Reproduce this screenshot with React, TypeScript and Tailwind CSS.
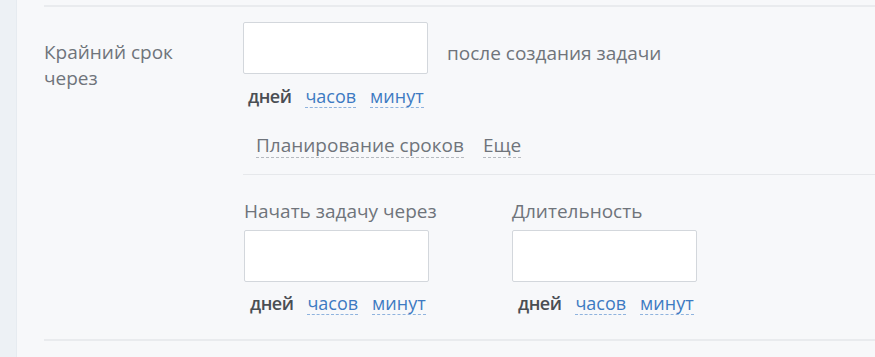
import React from "react"

function Units() {
  return (
    <div className="flex items-start gap-[14px] text-[18px] leading-[22px]">
      <span className="font-semibold tracking-[-0.5px] text-[#4a4e54]">дней</span>
      <span className="text-[#3d7ac2] border-b border-dashed border-[#8fb3de]">часов</span>
      <span className="text-[#3d7ac2] border-b border-dashed border-[#8fb3de]">минут</span>
    </div>
  )
}

function Field({ label }: { label: string }) {
  return (
    <div className="w-[268px] flex flex-col">
      <div className="text-[19px] leading-[22px] text-[#6f747b]">{label}</div>
      <div className="mt-[8px] w-[185px] h-[52px] bg-white border border-[#d3d7dc] rounded-[2px]" />
      <div className="mt-[10px] pl-[6px]">
        <Units />
      </div>
    </div>
  )
}

export default function App() {
  return (
    <div
      className="flex w-[875px] h-[357px] bg-[#f7f8fa] overflow-hidden"
      style={{ fontFamily: '"Open Sans", "Noto Sans", sans-serif' }}
    >
      <div className="w-[17px] shrink-0 bg-[#edf1f5] border-r border-[#e6ebf0]" />
      <div className="flex-1 pl-[27px] pt-[5px] flex flex-col">
        <div className="border-t-2 border-[#e9ebee]" />

        <div className="flex">
          <div className="w-[199px] pt-[32px] text-[19px] leading-[26px] text-[#6f747b]">
            Крайний срок
            <br />
            через
          </div>

          <div className="flex-1 flex flex-col pt-[15px]">
            <div className="flex items-start">
              <div className="w-[185px] h-[52px] bg-white border border-[#d3d7dc] rounded-[2px]" />
              <span className="ml-[19px] mt-[20px] text-[19px] leading-[22px] text-[#6f747b]">
                после создания задачи
              </span>
            </div>
            <div className="mt-[11px] pl-[5px]">
              <Units />
            </div>

            <div className="mt-[26px] pl-[13px] flex items-start gap-[19px] text-[19px] leading-[22px] text-[#6f747b]">
              <span className="pb-[1px] border-b border-dashed border-[#b5b9bf]">Планирование сроков</span>
              <span className="pb-[1px] border-b border-dashed border-[#b5b9bf]">Еще</span>
            </div>

            <div className="mt-[16px] border-t border-[#e6e8eb]" />

            <div className="flex pt-[25px] pl-[1px]">
              <Field label="Начать задачу через" />
              <Field label="Длительность" />
            </div>
          </div>
        </div>

        <div className="mt-[24px] border-t-2 border-[#e9ebee]" />
      </div>
    </div>
  )
}
